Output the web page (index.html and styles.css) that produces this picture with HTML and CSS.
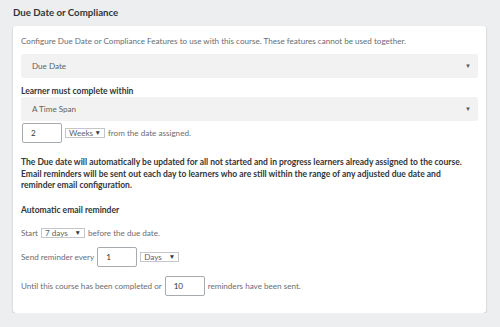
FILE: index.html
```html
<!DOCTYPE html>
<html lang="en">
<head>
    <meta charset="UTF-8">
    <title>Due Date or Compliance</title>
    <link rel="stylesheet" href="styles.css">
</head>
<body>
    <h1 class="title">Due Date or Compliance</h1>
    <div class="card">
        <p class="intro">Configure Due Date or Compliance Features to use with this course. These features cannot be used together.</p>

        <div class="dropdown first">
            <span>Due Date</span>
            <span class="arrow">&#9660;</span>
        </div>

        <p class="label">Learner must complete within</p>
        <div class="dropdown">
            <span>A Time Span</span>
            <span class="arrow">&#9660;</span>
        </div>

        <div class="row span-row">
            <span class="field">2</span>
            <span class="mini-select weeks">Weeks <span class="mini-arrow">&#9660;</span></span>
            <span>from the date assigned.</span>
        </div>

        <p class="notice">The Due date will automatically be updated for all not started and in progress learners already assigned to the course. Email reminders will be sent out each day to learners who are still within the range of any adjusted due date and reminder email configuration.</p>

        <p class="label reminder-label">Automatic email reminder</p>

        <div class="row start-row">
            <span>Start</span>
            <span class="mini-select days7">7 days <span class="mini-arrow">&#9660;</span></span>
            <span>before the due date.</span>
        </div>

        <div class="row send-row">
            <span>Send reminder every</span>
            <span class="field">1</span>
            <span class="mini-select days">Days <span class="mini-arrow">&#9660;</span></span>
        </div>

        <div class="row until-row">
            <span>Until this course has been completed or</span>
            <span class="field">10</span>
            <span>reminders have been sent.</span>
        </div>
    </div>
</body>
</html>
```

FILE: styles.css
```css
* {
    margin: 0;
    padding: 0;
    box-sizing: border-box;
}

body {
    font-family: 'Lato', sans-serif;
    font-size: 8.1px;
    line-height: 12px;
    background: #edeef0;
    color: #6a6d70;
    padding: 0 14px 0 13px;
}

.title {
    font-size: 9.7px;
    line-height: 14px;
    font-weight: 700;
    color: #32363a;
    padding: 5px 0 7px;
}

.card {
    background: #fff;
    border-radius: 3px;
    box-shadow: 0 1px 2px rgba(0, 0, 0, 0.25);
    padding: 9px 8px 19px;
    height: 287px;
}

.intro {
    margin-bottom: 7px;
}

.dropdown {
    display: flex;
    justify-content: space-between;
    align-items: center;
    height: 24px;
    background: #f2f2f2;
    border-radius: 2px;
    padding: 0 7px 0 11px;
    color: #5f6266;
}

.arrow {
    font-size: 6px;
    color: #54585c;
}

.label {
    font-size: 8.5px;
    font-weight: 700;
    color: #32363a;
    margin: 7px 0 0;
}

.row {
    display: flex;
    align-items: center;
    gap: 3px;
}

.field {
    display: inline-flex;
    align-items: center;
    width: 40px;
    height: 20px;
    border: 1px solid #a6abb0;
    border-radius: 2px;
    padding-left: 8px;
    color: #32363a;
    background: #fff;
}

.mini-select {
    display: inline-flex;
    align-items: center;
    justify-content: space-between;
    height: 10px;
    border: 1px solid #c4c7ca;
    padding: 0 3px;
    line-height: 8px;
    color: #5f6266;
}

.mini-arrow {
    font-size: 6.5px;
    color: #32363a;
}

.weeks {
    width: 40px;
}

.days7 {
    width: 44px;
}

.days {
    width: 39px;
}

.span-row {
    margin-top: 2px;
    margin-left: 1px;
}

.notice {
    font-size: 8.5px;
    font-weight: 700;
    color: #32363a;
    line-height: 11.7px;
    margin-top: 14px;
    max-width: 450px;
}

.reminder-label {
    margin-top: 12px;
}

.start-row {
    margin-top: 11px;
}

.send-row {
    margin-top: 8px;
}

.until-row {
    margin-top: 9px;
}
```
